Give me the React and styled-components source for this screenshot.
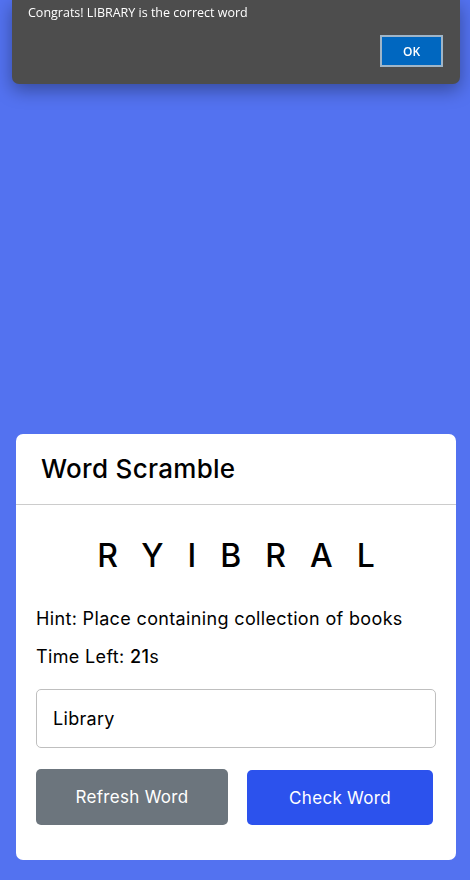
import React, { useState } from "react";
import styled, { createGlobalStyle } from "styled-components";

const GlobalStyle = createGlobalStyle`
  * {
    margin: 0;
    padding: 0;
    box-sizing: border-box;
  }
  body {
    background: #5372f0;
    font-family: Inter, "Open Sans", sans-serif;
    line-height: 1.5;
  }
`;

const Page = styled.div`
  min-height: 100vh;
  display: flex;
  align-items: flex-end;
  padding: 0 14px 20px 16px;
`;

const Card = styled.div`
  width: 100%;
  background: #fff;
  border-radius: 7px;
`;

const Header = styled.h2`
  padding: 15px 25px 16px;
  font-size: 26px;
  font-weight: 500;
  letter-spacing: 0.3px;
  color: #000;
  border-bottom: 1px solid #ccc;
`;

const Body = styled.div`
  padding: 27px 20px 35px;
`;

const Scrambled = styled.p`
  text-align: center;
  font-size: 32px;
  font-weight: 500;
  letter-spacing: 24px;
  margin-right: -24px;
  color: #000;
`;

const Details = styled.div`
  margin: 25px 0 19px;
`;

const InfoLine = styled.p`
  font-size: 18px;
  letter-spacing: 0.35px;
  color: #000;
  & + & {
    margin-top: 11px;
  }
  b {
    font-weight: 500;
  }
`;

const WordInput = styled.input`
  width: 100%;
  height: 59px;
  border: 1px solid #bfbfbf;
  border-radius: 5px;
  padding: 0 16px;
  font-size: 18px;
  letter-spacing: 0.3px;
  font-family: inherit;
  outline: none;
`;

const Buttons = styled.div`
  display: flex;
  justify-content: space-between;
  margin-top: 21px;
`;

const Button = styled.button`
  border: none;
  outline: none;
  cursor: pointer;
  color: #fff;
  font-size: 17px;
  letter-spacing: 0.3px;
  font-family: inherit;
  border-radius: 5px;
  background: ${(p) => (p.primary ? "#2c52ed" : "#6c757d")};
  width: ${(p) => (p.primary ? "186px" : "192px")};
  height: ${(p) => (p.primary ? "55px" : "56px")};
  margin: ${(p) => (p.primary ? "1px 3px 0 0" : "0")};
`;

const Alert = styled.div`
  position: fixed;
  top: 0;
  left: 12px;
  width: 448px;
  height: 84px;
  background: #4d4d4d;
  border-radius: 0 0 7px 7px;
  box-shadow: 0 6px 18px rgba(0, 0, 0, 0.35);
  padding: 4px 16px 0;
  font-family: "Segoe UI", "Open Sans", sans-serif;
  line-height: normal;
  display: flex;
  flex-direction: column;
`;

const AlertText = styled.p`
  color: #fff;
  font-size: 12.5px;
`;

const AlertActions = styled.div`
  display: flex;
  justify-content: flex-end;
  margin-top: 14px;
`;

const OkButton = styled.button`
  width: 63px;
  height: 32px;
  background: #0067c0;
  border: 2px solid #9fb5c8;
  color: #fff;
  font-size: 12px;
  font-weight: 600;
  font-family: inherit;
  margin-right: 1px;
`;

export default function App() {
  const [word, setWord] = useState("Library");
  const [open, setOpen] = useState(true);

  return (
    <>
      <GlobalStyle />
      <Page>
        <Card>
          <Header>Word Scramble</Header>
          <Body>
            <Scrambled>RYIBRAL</Scrambled>
            <Details>
              <InfoLine>Hint: Place containing collection of books</InfoLine>
              <InfoLine>
                Time Left: <b>21</b>s
              </InfoLine>
            </Details>
            <WordInput value={word} onChange={(e) => setWord(e.target.value)} />
            <Buttons>
              <Button>Refresh Word</Button>
              <Button primary>Check Word</Button>
            </Buttons>
          </Body>
        </Card>
      </Page>
      {open ? (
        <Alert>
          <AlertText>Congrats! LIBRARY is the correct word</AlertText>
          <AlertActions>
            <OkButton onClick={() => setOpen(false)}>OK</OkButton>
          </AlertActions>
        </Alert>
      ) : null}
    </>
  );
}
